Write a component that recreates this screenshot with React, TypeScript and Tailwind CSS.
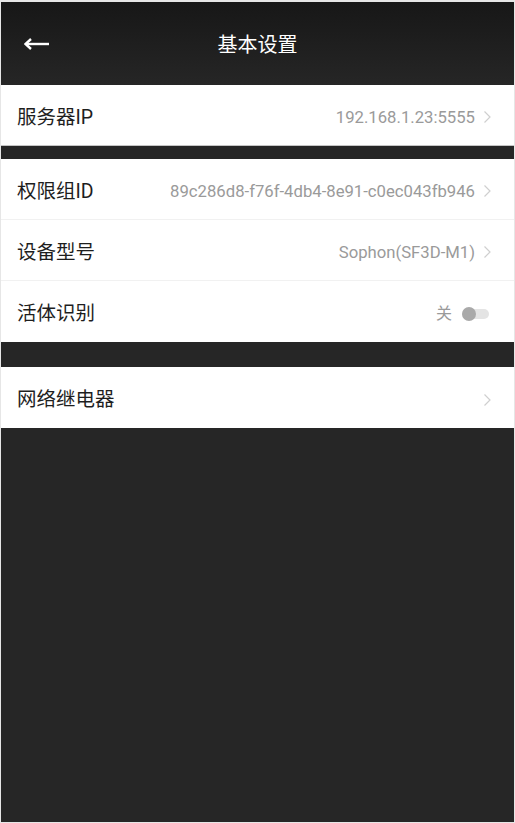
import React from 'react';

const Chevron = () => (
  <svg width="9" height="14" viewBox="0 0 9 14" className="ml-[8px] shrink-0">
    <path d="M1.5 1.5 L7 7 L1.5 12.5" fill="none" stroke="#cfcfcf" strokeWidth="1.2" />
  </svg>
);

const Row = ({
  label,
  value,
  border,
  children,
}: {
  label: string;
  value?: string;
  border?: string;
  children?: React.ReactNode;
}) => (
  <div className={`flex h-[61px] items-center bg-white pl-[16px] pr-[22px] pt-[5px] ${border ?? ''}`}>
    <span className="text-[19.5px] text-[#1e1e1e]">{label}</span>
    <div className="ml-auto flex items-center">
      {value && <span className="text-[16.7px] text-[#9a9a9a]">{value}</span>}
      {children ?? <Chevron />}
    </div>
  </div>
);

const App = () => {
  return (
    <div
      className="flex h-[823px] w-[515px] flex-col overflow-hidden border-x border-b border-t-2 border-[#e6e6e6] bg-[#262626]"
      style={{ fontFamily: 'Roboto, "Noto Sans CJK SC", sans-serif' }}
    >
      {/* Header */}
      <div className="relative flex h-[83px] shrink-0 items-center justify-center bg-gradient-to-b from-[#171717] to-[#262626] pt-[2px]">
        <svg width="26" height="12" viewBox="0 0 26 12" className="absolute left-[23px] top-[36px]">
          <path d="M2 6 H25" stroke="#ffffff" strokeWidth="2.4" />
          <path d="M7 1 L1.5 6 L7 11" fill="none" stroke="#ffffff" strokeWidth="2.4" />
        </svg>
        <h1 className="text-[20px] text-white">基本设置</h1>
      </div>

      <Row label="服务器IP" value="192.168.1.23:5555" border="border-b border-[#c4c4c4]" />

      <div className="h-[13px] shrink-0" />

      <Row label="权限组ID" value="89c286d8-f76f-4db4-8e91-c0ec043fb946" border="border-b border-[#f1f1f1]" />
      <Row label="设备型号" value="Sophon(SF3D-M1)" border="border-b border-[#f1f1f1]" />
      <Row label="活体识别">
        <span className="mr-[10px] text-[16px] text-[#9a9a9a]">关</span>
        <div className="relative mr-[3px] h-[10px] w-[27px] rounded-full bg-[#e4e4e4]">
          <div className="absolute left-0 top-[-2px] h-[14px] w-[14px] rounded-full bg-[#a9a9a9]" />
        </div>
      </Row>

      <div className="h-[25px] shrink-0" />

      <Row label="网络继电器" />
    </div>
  );
};

export default App;
